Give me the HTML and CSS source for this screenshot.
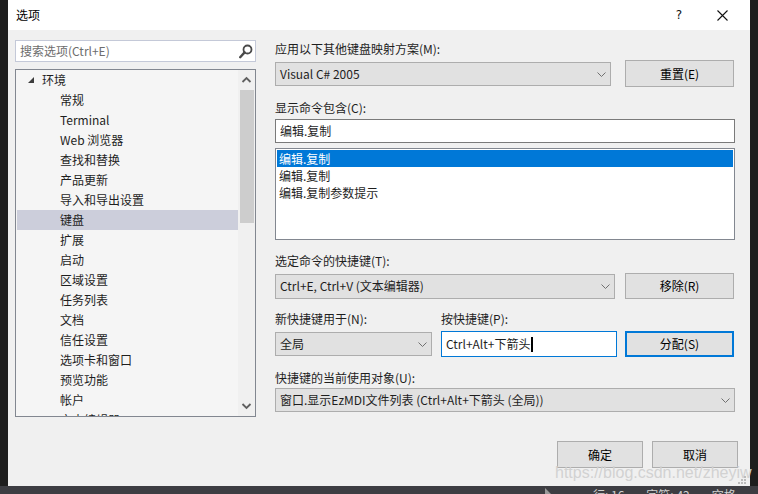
FILE: index.html
```html
<!DOCTYPE html>
<html lang="zh-CN">
<head>
  <meta charset="UTF-8">
  <title>选项</title>
  <link rel="stylesheet" href="styles.css">
</head>
<body>
  <div class="screen">
    <!-- Dialog -->
    <div class="dialog">
      <div class="titlebar">
        <span class="title">选项</span>
        <span class="tb-btn help">?</span>
        <span class="tb-btn close">
          <svg width="11" height="11" viewBox="0 0 11 11"><path d="M0.5 0.5 L10.5 10.5 M10.5 0.5 L0.5 10.5" stroke="#111" stroke-width="1.1" fill="none"/></svg>
        </span>
      </div>

      <div class="content">
        <!-- Left: search + tree -->
        <div class="left">
          <div class="search">
            <span class="placeholder">搜索选项(Ctrl+E)</span>
            <svg class="search-icon" width="14" height="15" viewBox="0 0 14 15">
              <circle cx="8.5" cy="5.5" r="4" stroke="#4a4a4a" stroke-width="1.8" fill="none"/>
              <path d="M5.6 8.4 L1.2 13.2" stroke="#4a4a4a" stroke-width="2.4" stroke-linecap="round"/>
            </svg>
          </div>
          <div class="tree">
            <ul class="tree-list">
              <li class="node root">
                <svg class="twisty" width="6" height="6" viewBox="0 0 6 6"><polygon points="6,0 6,6 0,6" fill="#3c3c3c"/></svg>
                环境
              </li>
              <li class="node">常规</li>
              <li class="node">Terminal</li>
              <li class="node">Web 浏览器</li>
              <li class="node">查找和替换</li>
              <li class="node">产品更新</li>
              <li class="node">导入和导出设置</li>
              <li class="node selected">键盘</li>
              <li class="node">扩展</li>
              <li class="node">启动</li>
              <li class="node">区域设置</li>
              <li class="node">任务列表</li>
              <li class="node">文档</li>
              <li class="node">信任设置</li>
              <li class="node">选项卡和窗口</li>
              <li class="node">预览功能</li>
              <li class="node">帐户</li>
              <li class="node">文本编辑器</li>
            </ul>
            <div class="scrollbar">
              <svg class="arrow" width="17" height="20" viewBox="0 0 17 20"><path d="M4.5 12 L8.5 8 L12.5 12" stroke="#606060" stroke-width="1.8" fill="none"/></svg>
              <div class="thumb"></div>
              <div class="track"></div>
              <svg class="arrow" width="17" height="20" viewBox="0 0 17 20"><path d="M4.5 8 L8.5 12 L12.5 8" stroke="#606060" stroke-width="1.8" fill="none"/></svg>
            </div>
          </div>
        </div>

        <!-- Right: keyboard settings -->
        <div class="right">
          <div class="label first">应用以下其他键盘映射方案(M):</div>
          <div class="row r1">
            <div class="combo w336">
              <span>Visual C# 2005</span>
              <svg class="chev" width="9" height="5" viewBox="0 0 9 5"><path d="M0.5 0.5 L4.5 4.5 L8.5 0.5" stroke="#707070" stroke-width="1" fill="none"/></svg>
            </div>
            <div class="button">重置(E)</div>
          </div>

          <div class="label gap13">显示命令包含(C):</div>
          <div class="textbox filter">编辑.复制</div>
          <div class="listbox">
            <div class="item active">编辑.复制</div>
            <div class="item">编辑.复制</div>
            <div class="item">编辑.复制参数提示</div>
          </div>

          <div class="label gap13">选定命令的快捷键(T):</div>
          <div class="row r2">
            <div class="combo w340">
              <span>Ctrl+E, Ctrl+V (文本编辑器)</span>
              <svg class="chev" width="9" height="5" viewBox="0 0 9 5"><path d="M0.5 0.5 L4.5 4.5 L8.5 0.5" stroke="#707070" stroke-width="1" fill="none"/></svg>
            </div>
            <div class="button">移除(R)</div>
          </div>

          <div class="row labels gap12">
            <div class="label w166">新快捷键用于(N):</div>
            <div class="label">按快捷键(P):</div>
          </div>
          <div class="row r3">
            <div class="combo w157">
              <span>全局</span>
              <svg class="chev" width="9" height="5" viewBox="0 0 9 5"><path d="M0.5 0.5 L4.5 4.5 L8.5 0.5" stroke="#707070" stroke-width="1" fill="none"/></svg>
            </div>
            <div class="textbox keys"><span>Ctrl+Alt+下箭头</span><span class="caret"></span></div>
            <div class="button default">分配(S)</div>
          </div>

          <div class="label gap13">快捷键的当前使用对象(U):</div>
          <div class="combo wide">
            <span>窗口.显示EzMDI文件列表 (Ctrl+Alt+下箭头 (全局))</span>
            <svg class="chev" width="9" height="5" viewBox="0 0 9 5"><path d="M0.5 0.5 L4.5 4.5 L8.5 0.5" stroke="#707070" stroke-width="1" fill="none"/></svg>
          </div>
        </div>
      </div>

      <div class="footer">
        <div class="button big">确定</div>
        <div class="button big">取消</div>
      </div>

      <div class="watermark">https://blog.csdn.net/zheyiw</div>
      <svg class="grip" width="8" height="8" viewBox="0 0 8 8" fill="#bcbcbc">
        <rect x="6" y="0" width="2" height="2"/><rect x="3" y="3" width="2" height="2"/><rect x="6" y="3" width="2" height="2"/>
        <rect x="0" y="6" width="2" height="2"/><rect x="3" y="6" width="2" height="2"/><rect x="6" y="6" width="2" height="2"/>
      </svg>
    </div>
  </div>

  <!-- Editor status bar behind the dialog -->
  <div class="statusbar">
    <span class="sb-arrow"></span>
    <span class="sb-item">行: 16</span>
    <span class="sb-item">字符: 42</span>
    <span class="sb-item">空格</span>
    <span class="sb-item">CRLF</span>
  </div>
</body>
</html>
```

FILE: styles.css
```css
/* Reset */
* {
  margin: 0;
  padding: 0;
  box-sizing: border-box;
}
html, body {
  width: 758px;
  height: 494px;
  overflow: hidden;
}
body {
  background-color: #1e1e1e;
  font-family: "Noto Sans CJK SC", "Noto Sans", sans-serif;
  font-size: 12px;
  color: #1e1e1e;
}

.screen {
  height: 486px;
  padding-left: 8px;
}

/* Dialog */
.dialog {
  position: relative;
  width: 742px;
  height: 486px;
  background-color: #f0f0f0;
  display: flex;
  flex-direction: column;
}
.titlebar {
  height: 30px;
  background-color: #fff;
  display: flex;
  align-items: center;
  padding-left: 8px;
}
.titlebar .title {
  flex: 1;
  line-height: 16px;
  color: #000;
}
.tb-btn {
  display: flex;
  align-items: center;
  justify-content: center;
  height: 30px;
}
.tb-btn.help {
  width: 14px;
  margin-right: 31px;
  font-family: "DejaVu Sans", sans-serif;
  font-size: 12px;
  color: #111;
}
.tb-btn.close {
  width: 11px;
  margin-right: 22px;
}

.content {
  display: flex;
  padding: 10px 15px 0 7px;
  height: 387px;
}

/* Left pane */
.left {
  width: 241px;
  display: flex;
  flex-direction: column;
  gap: 7px;
}
.search {
  height: 22px;
  background-color: #fff;
  border: 1px solid #c4c9d8;
  display: flex;
  align-items: center;
  padding-left: 4px;
  padding-right: 2px;
}
.search .placeholder {
  flex: 1;
  color: #6d6d6d;
  line-height: 16px;
}
.search-icon {
  margin-top: 1px;
}
.tree {
  flex: 1;
  border: 1px solid #828790;
  background-color: #f5f5f5;
  display: flex;
  overflow: hidden;
}
.tree-list {
  list-style: none;
  flex: 1;
  padding-left: 1px;
}
.node {
  height: 20px;
  line-height: 20px;
  padding-left: 43px;
  white-space: nowrap;
}
.node.root {
  padding-left: 11px;
  display: flex;
  align-items: center;
}
.twisty {
  margin-right: 8px;
}
.node.selected {
  background-color: #cccedb;
}
.scrollbar {
  width: 17px;
  background-color: #f0f0f0;
  display: flex;
  flex-direction: column;
}
.scrollbar .thumb {
  height: 133px;
  margin: 0 1px 0 2px;
  background-color: #cdcdcd;
}
.scrollbar .track {
  flex: 1;
}

/* Right pane */
.right {
  flex: 1;
  margin-left: 19px;
  display: flex;
  flex-direction: column;
}
.label {
  line-height: 16px;
  height: 16px;
  white-space: nowrap;
}
.label.first {
  margin-top: 1px;
}
.gap13 {
  margin-top: 13px;
}
.gap12 {
  margin-top: 12px;
}
.row {
  display: flex;
  align-items: center;
}
.row.r1 {
  height: 27px;
  margin-top: 3px;
  gap: 14px;
}
.row.r2 {
  height: 26px;
  margin-top: 4px;
  gap: 10px;
}
.row.r3 {
  height: 26px;
  margin-top: 4px;
  gap: 9px;
}
.row.r3 .button {
  margin-left: -1px;
}
.label.w166 {
  width: 166px;
}

.combo {
  height: 24px;
  background-color: #e1e1e1;
  border: 1px solid #adadad;
  display: flex;
  align-items: center;
  padding-left: 4px;
  padding-right: 4px;
  white-space: nowrap;
}
.combo span {
  flex: 1;
  line-height: 16px;
}
.combo.w336 { width: 336px; }
.combo.w340 { width: 340px; height: 25px; }
.combo.w157 { width: 157px; }
.combo.wide {
  margin-top: 2px;
  width: 460px;
}
.chev {
  margin-top: 1px;
}

.button {
  width: 109px;
  height: 27px;
  background-color: #e1e1e1;
  border: 1px solid #adadad;
  display: flex;
  align-items: center;
  justify-content: center;
  line-height: 16px;
  color: #000;
}
.row.r2 .button,
.row.r3 .button {
  height: 26px;
}
.button.default {
  border: 2px solid #0078d7;
}
.button.big {
  width: 86px;
  height: 27px;
}

.textbox {
  background-color: #fff;
  border: 1px solid #7a7a7a;
  display: flex;
  align-items: center;
  padding-left: 4px;
  line-height: 16px;
}
.textbox.filter {
  margin-top: 3px;
  height: 24px;
  width: 460px;
}
.textbox.keys {
  width: 176px;
  height: 26px;
  border-color: #0078d7;
}
.caret {
  width: 2px;
  height: 15px;
  background-color: #000;
  margin-left: 1px;
}

.listbox {
  margin-top: 5px;
  height: 92px;
  width: 460px;
  background-color: #fff;
  border: 1px solid #828790;
  padding: 1px;
}
.listbox .item {
  height: 17px;
  line-height: 17px;
  padding-left: 2px;
}
.listbox .item.active {
  background-color: #0078d7;
  color: #fff;
}

/* Footer */
.footer {
  display: flex;
  justify-content: flex-end;
  gap: 9px;
  margin-top: 24px;
  padding-right: 12px;
}

/* Overlays */
.watermark {
  position: absolute;
  left: 547px;
  top: 464px;
  font-family: "Liberation Sans", Arial, sans-serif;
  font-size: 16px;
  line-height: 18px;
  white-space: nowrap;
  color: #d2d2d2;
}
.grip {
  position: absolute;
  right: 4px;
  bottom: 2px;
}

/* Status bar */
.statusbar {
  height: 8px;
  background-color: #3d3d42;
  display: flex;
  align-items: flex-start;
  overflow: hidden;
  padding-left: 545px;
  color: #d0d0d0;
  font-size: 12px;
}
.sb-arrow {
  width: 0;
  height: 0;
  margin-top: 2px;
  border-left: 6px solid #9a9a9a;
  border-top: 6px solid transparent;
  margin-right: 42px;
}
.sb-item {
  line-height: 16px;
  margin-top: 1px;
  margin-right: 22px;
  white-space: nowrap;
}
```
